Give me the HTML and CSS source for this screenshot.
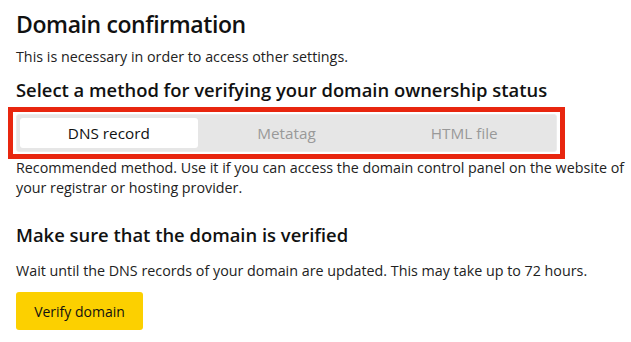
FILE: index.html
```html
<!DOCTYPE html>
<html lang="en">
<head>
  <meta charset="UTF-8">
  <title>Domain confirmation</title>
  <link rel="stylesheet" href="styles.css">
</head>
<body>
  <div class="page">
    <h1>Domain confirmation</h1>
    <p class="lead">This is necessary in order to access other settings.</p>
    <h2>Select a method for verifying your domain ownership status</h2>
    <div class="highlight">
      <div class="tabs">
        <div class="tab active">DNS record</div>
        <div class="tab">Metatag</div>
        <div class="tab">HTML file</div>
      </div>
    </div>
    <p class="hint">Recommended method. Use it if you can access the domain control panel on the website of your registrar or hosting provider.</p>
    <h2 class="check-title">Make sure that the domain is verified</h2>
    <p class="wait">Wait until the DNS records of your domain are updated. This may take up to 72 hours.</p>
    <button class="btn">Verify domain</button>
  </div>
</body>
</html>
```

FILE: styles.css
```css
body {
  margin: 0;
  background: #fff;
  color: #000;
  font-family: "Open Sans", Arial, sans-serif;
}
.page {
  padding: 0 6px 0 16px;
}
h1 {
  margin: 0;
  padding-top: 7px;
  font-size: 23px;
  font-weight: 600;
  letter-spacing: -0.4px;
  line-height: 34px;
  color: #111;
}
.lead {
  margin: 6px 0 0;
  font-size: 14.3px;
  line-height: 20px;
  color: #222;
}
h2 {
  margin: 11px 0 0;
  font-size: 18.4px;
  font-weight: 600;
  line-height: 24px;
  color: #111;
}
.highlight {
  margin: 5px 0 0 -8px;
  width: 541px;
  border: 5px solid #e8260f;
  padding: 2px 3px;
}
.tabs {
  display: flex;
  background: #e6e6e6;
  border: 1px solid #ececec;
  border-radius: 3px;
  padding: 3px;
}
.tab {
  flex: 1;
  text-align: center;
  font-size: 15.3px;
  line-height: 30px;
  color: #999;
}
.tab.active {
  background: #fff;
  color: #111;
  border-radius: 3px;
}
.hint {
  margin: -1px 0 0;
  font-size: 14.3px;
  line-height: 20px;
  color: #222;
}
.check-title {
  margin-top: 25px;
}
.wait {
  margin: 14px 0 0;
  font-size: 14.3px;
  line-height: 20px;
  color: #222;
}
.btn {
  margin-top: 11px;
  width: 127px;
  height: 38px;
  border: none;
  border-radius: 3px;
  background: #fcd000;
  font-family: inherit;
  font-size: 14px;
  color: #111;
}
```
